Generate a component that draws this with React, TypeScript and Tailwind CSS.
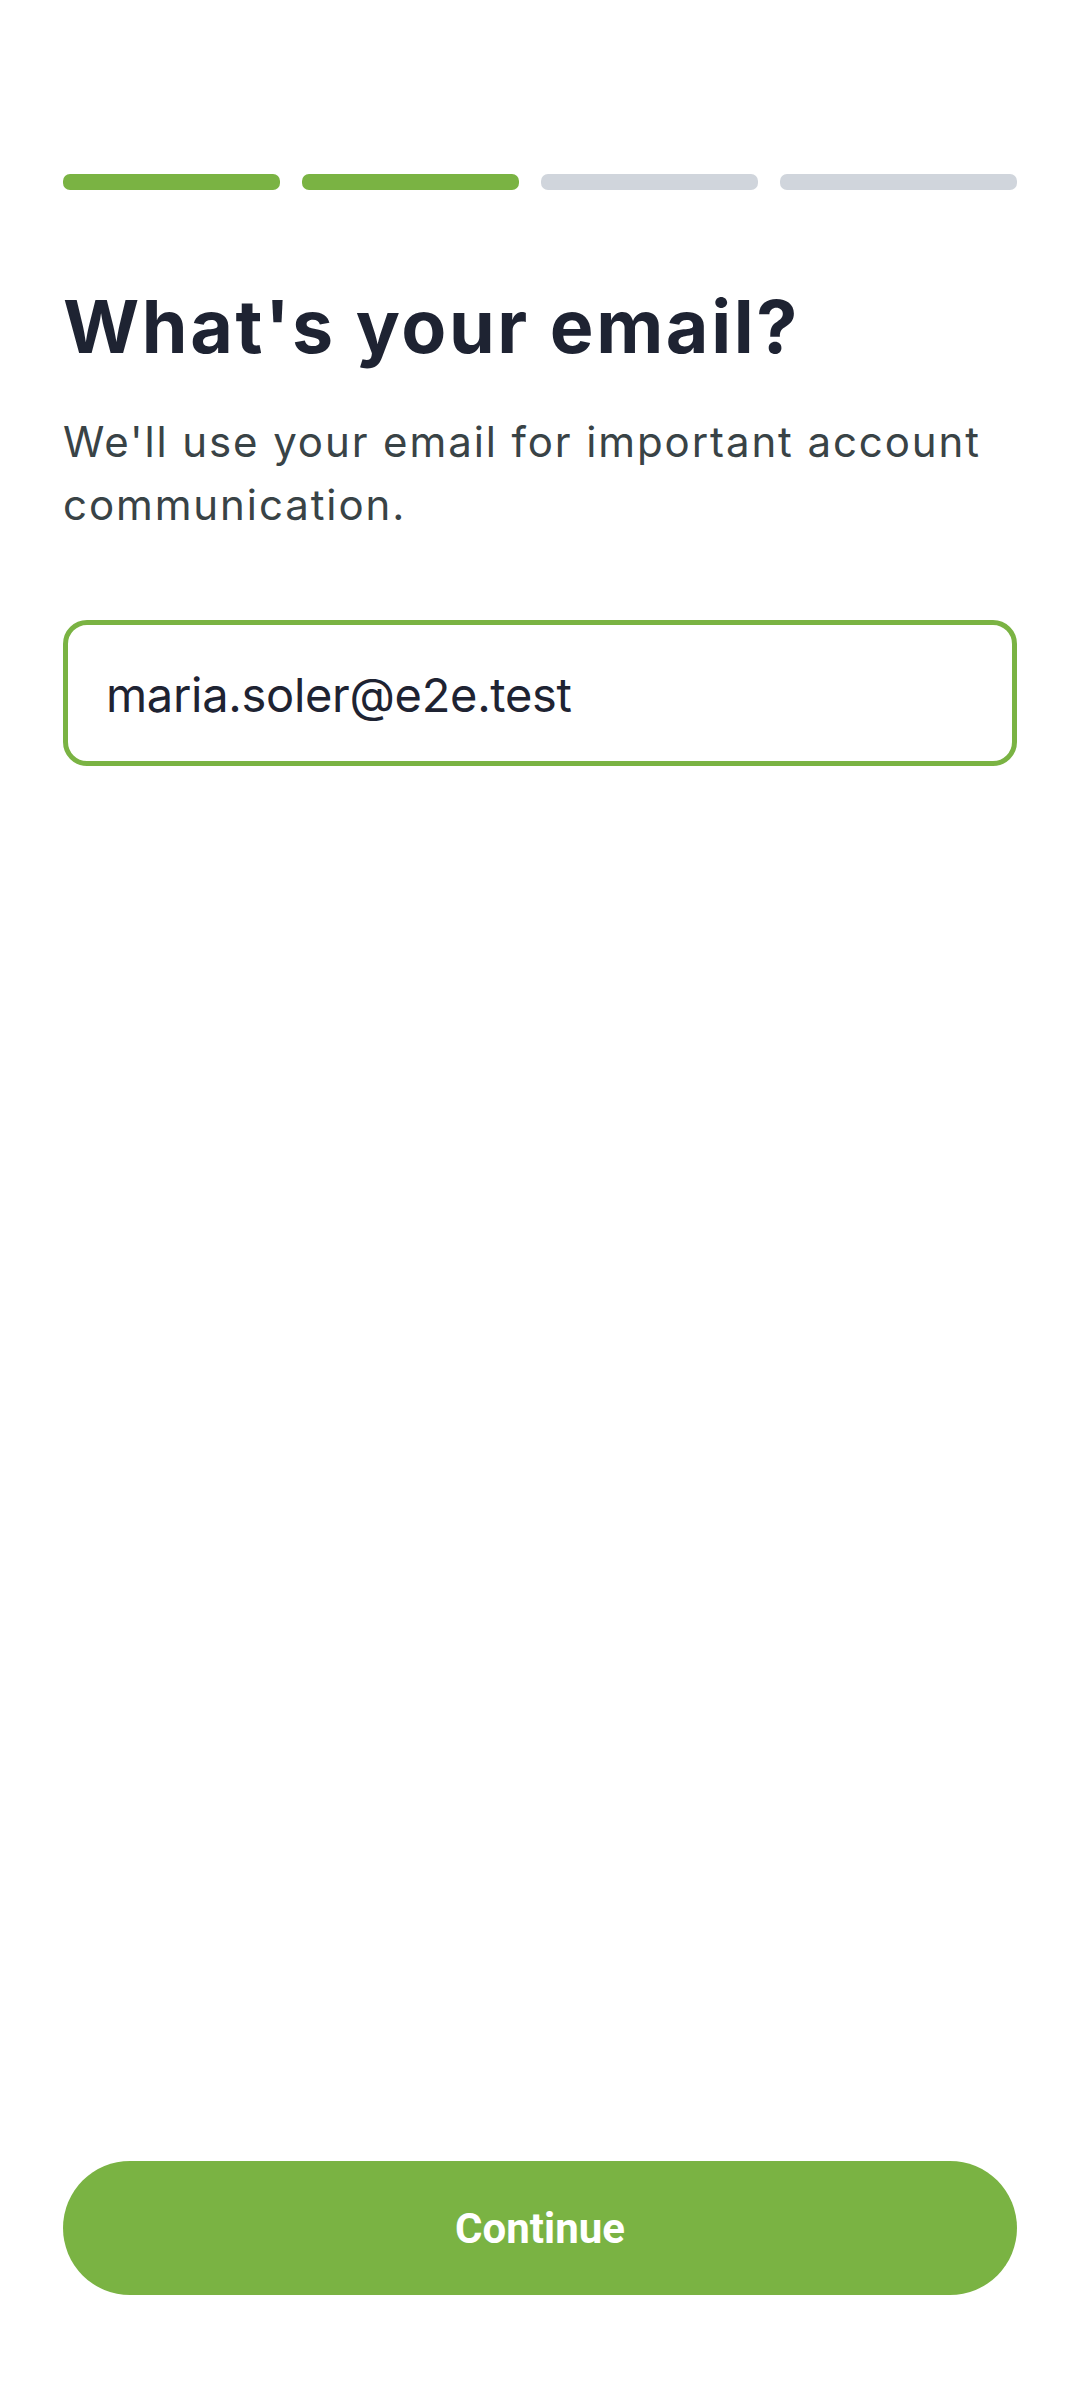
import React from "react";

export default function App() {
  const font = { fontFamily: "Inter, 'Noto Sans', sans-serif" };
  return (
    <div className="w-[1080px] h-[2400px] bg-white flex flex-col px-[63px]" style={font}>
      <div className="flex gap-[22px] mt-[174px]">
        <div className="h-[16px] w-[217px] rounded-[7px] bg-[#7ab343]" />
        <div className="h-[16px] w-[217px] rounded-[7px] bg-[#7ab343]" />
        <div className="h-[16px] w-[217px] rounded-[7px] bg-[#d0d5dc]" />
        <div className="h-[16px] flex-1 rounded-[7px] bg-[#d0d5dc]" />
      </div>
      <h1 className="mt-[89px] text-[73.5px] leading-[96px] font-bold text-[#1e2332] tracking-[2.6px]">
        What's your email?
      </h1>
      <p className="mt-[35px] text-[42px] leading-[63px] text-[#394346] tracking-[1.9px]">
        We'll use your email for important account communication.
      </p>
      <div className="mt-[84px] h-[146px] rounded-[24px] border-[5px] border-[#7ab343] flex items-center pl-[38px]">
        <span className="text-[47px] text-[#1e2332] translate-y-[2px] tracking-[-0.3px]">maria.soler@e2e.test</span>
      </div>
      <div className="flex-1" />
      <button className="h-[134px] w-full rounded-full bg-[#7ab343] flex items-center justify-center mb-[105px]">
        <span className="text-white text-[42px] font-bold" style={{ fontFamily: "Roboto, sans-serif" }}>
          Continue
        </span>
      </button>
    </div>
  );
}
